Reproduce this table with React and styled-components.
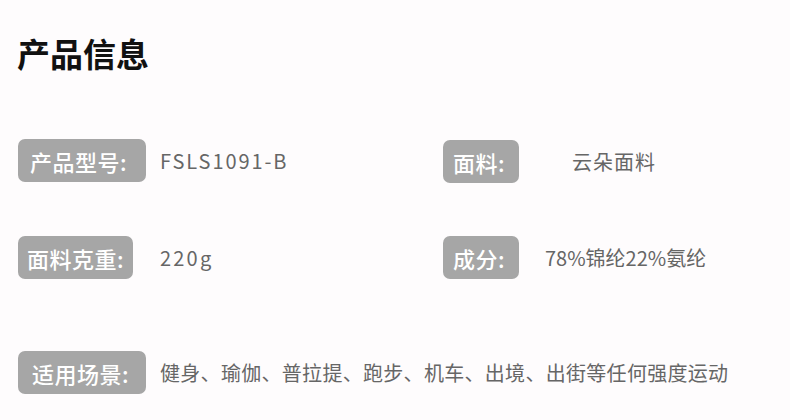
import React from 'react';
import styled, { createGlobalStyle } from 'styled-components';

const GlobalStyle = createGlobalStyle`
  html, body {
    margin: 0;
    padding: 0;
    background: #fefcfd;
  }
  body {
    font-family: 'Noto Sans CJK SC', 'Noto Sans', sans-serif;
  }
`;

const Page = styled.div`
  width: 790px;
  height: 420px;
  box-sizing: border-box;
  padding: 35px 0 0 17px;
  overflow: hidden;
`;

const Title = styled.h1`
  margin: 0;
  font-size: 33px;
  line-height: 36px;
  font-weight: 700;
  color: #111;
`;

const Grid = styled.div`
  display: grid;
  grid-template-columns: 425px 1fr;
  row-gap: 53px;
  margin-top: 67px;
  padding-left: 1px;
`;

const Item = styled.div`
  display: grid;
  grid-template-columns: ${(p) => p.$labelCol}px auto;
  align-items: center;
  margin-top: ${(p) => p.$top || 0}px;
`;

const Label = styled.div`
  width: ${(p) => p.$width}px;
  height: 43px;
  box-sizing: border-box;
  padding-left: ${(p) => p.$pad}px;
  display: flex;
  align-items: center;
  background: #a6a6a6;
  border-radius: 7px;
  color: #fff;
  font-size: 22px;
  font-weight: 500;
  letter-spacing: 0.5px;
  white-space: nowrap;
`;

const Value = styled.div`
  padding-left: ${(p) => p.$indent || 0}px;
  color: #666;
  font-size: 20px;
  letter-spacing: ${(p) => p.$spacing ?? 1}px;
  white-space: nowrap;
`;

const Scene = styled(Item)`
  margin-top: 72px;
  padding-left: 1px;
`;

export default function App() {
  return (
    <>
      <GlobalStyle />
      <Page>
        <Title>产品信息</Title>
        <Grid>
          <Item $labelCol={142}>
            <Label $width={128} $pad={12}>产品型号:</Label>
            <Value $spacing={1.9}>FSLS1091-B</Value>
          </Item>
          <Item $labelCol={102} $top={2}>
            <Label $width={76} $pad={10}>面料:</Label>
            <Value $indent={27}>云朵面料</Value>
          </Item>
          <Item $labelCol={142}>
            <Label $width={115} $pad={9}>面料克重:</Label>
            <Value $spacing={2.2}>220g</Value>
          </Item>
          <Item $labelCol={102}>
            <Label $width={76} $pad={10}>成分:</Label>
            <Value $spacing={0}>78%锦纶22%氨纶</Value>
          </Item>
        </Grid>
        <Scene $labelCol={142}>
          <Label $width={128} $pad={14}>适用场景:</Label>
          <Value $spacing={0.3}>健身、瑜伽、普拉提、跑步、机车、出境、出街等任何强度运动</Value>
        </Scene>
      </Page>
    </>
  );
}
